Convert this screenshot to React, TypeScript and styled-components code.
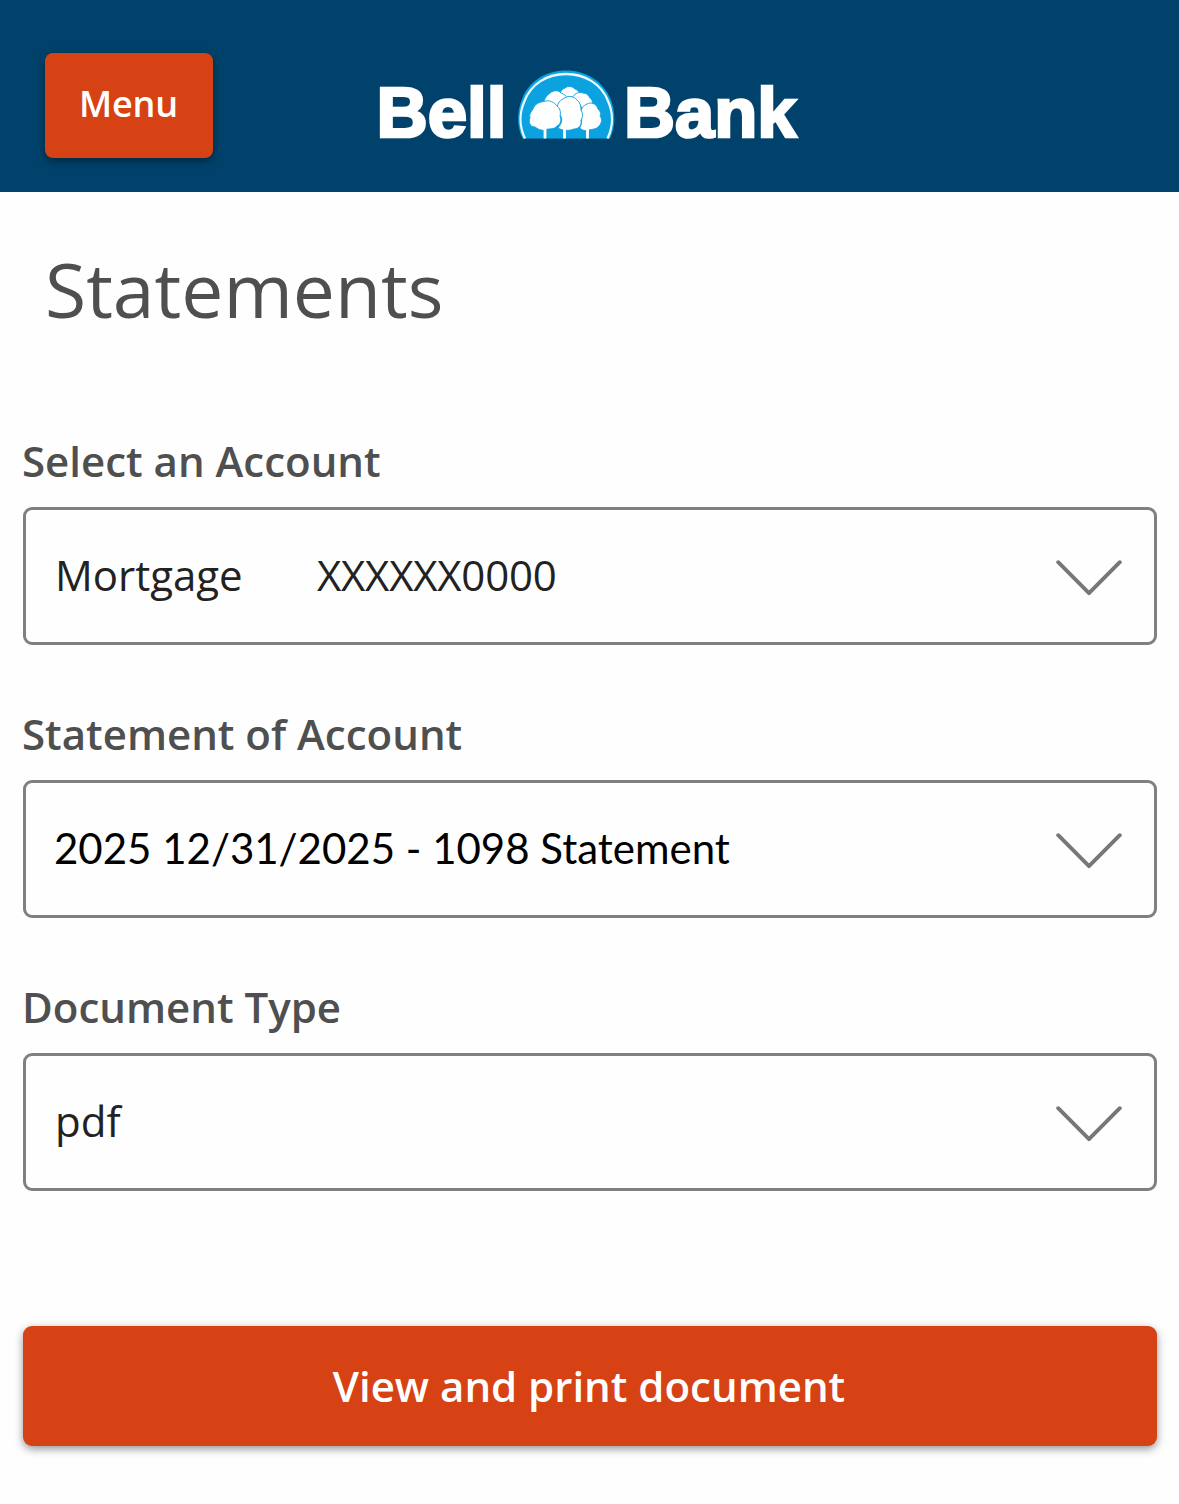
import React from "react";
import styled, { createGlobalStyle, css } from "styled-components";

const GlobalStyle = createGlobalStyle`
  *, *::before, *::after { box-sizing: border-box; }
  body {
    margin: 0;
    background: #fefefe;
    font-family: "Open Sans", sans-serif;
    color: #4f4f4f;
  }
`;

const Header = styled.header`
  display: grid;
  grid-template-columns: 324px 1fr;
  height: 192px;
  padding: 53px 45px 0;
  background: #00426b;
`;

const raised = css`
  border: 0;
  color: #fff;
  background: #d64213;
  font-family: inherit;
  font-weight: 600;
  box-shadow: 0 3px 9px rgba(0, 0, 0, 0.42);
`;

const MenuButton = styled.button`
  ${raised}
  width: 168px;
  height: 105px;
  padding: 0 1px 5px 0;
  border-radius: 8px;
  font-size: 36px;
  letter-spacing: -0.2px;
`;

const Logo = styled.svg`
  display: block;
  width: 444px;
  height: 96px;
  margin-top: 11px;
`;

const Wordmark = styled.text`
  font: 700 70.5px "Liberation Sans", Arial, sans-serif;
  fill: #fff;
  stroke: #fff;
  stroke-width: 2.7px;
`;

const Title = styled.h1`
  margin: 0;
  padding: 46px 45px 0;
  font-size: 75px;
  line-height: 102px;
  font-weight: 400;
`;

const Form = styled.form`
  display: flex;
  flex-direction: column;
  padding: 92px 22px 58px 23px;
`;

const Field = styled.div`
  height: 273px;
`;

const Label = styled.label`
  display: block;
  height: 75px;
  margin-left: -1px;
  line-height: 57px;
  font-size: 42px;
  font-weight: 600;
  white-space: nowrap;
`;

const SelectBox = styled.div<{ $family?: string; $color?: string; $indent?: number }>`
  display: flex;
  align-items: center;
  justify-content: space-between;
  height: 138px;
  padding: 0 32px 0 ${(p) => p.$indent ?? 29}px;
  border: 3px solid #808080;
  border-radius: 9px;
  font-family: ${(p) => p.$family ?? "inherit"};
  font-size: 42px;
  color: ${(p) => p.$color ?? "#222"};
`;

const Value = styled.span<{ $lift?: number }>`
  display: flex;
  padding-bottom: ${(p) => p.$lift ?? 3}px;
  white-space: nowrap;
`;

const AccountKind = styled.span`
  width: 262px;
`;

const AccountNumber = styled.span`
  letter-spacing: -0.2px;
`;

const Chevron = styled.svg`
  width: 66px;
  height: 38px;
  margin-top: 3px;
  fill: none;
  stroke: #777;
  stroke-width: 3.9px;
  stroke-linecap: round;
  stroke-linejoin: round;
`;

const SubmitButton = styled.button`
  ${raised}
  height: 120px;
  margin-top: 75px;
  padding: 0 2px 2px 0;
  border-radius: 9px;
  font-size: 42px;
`;

const DownArrow = () => (
  <Chevron viewBox="0 0 66 38" aria-hidden="true">
    <path d="M2.2 3.2 33 34.2 63.8 3.2" />
  </Chevron>
);

const BellBankLogo = () => (
  <Logo viewBox="-10 -4 444 96" role="img" aria-label="Bell Bank">
    <Wordmark x="-2.5" y="69" textLength="130" lengthAdjust="spacingAndGlyphs">Bell</Wordmark>
    <path d="M143.500 70.500C137.500 58 138 43 143 31C150 13 167 2.500 187 2.500C207 2.500 224 13 231.500 31C236.500 43 237 58 231 70.500Z" fill="#0ba2df" />
    <path d="M146 70.500C139.500 57 141 43 145.500 33C152 16 168 6 187 6C206 6 222.500 16 229 33C233.500 43 235 57 228.500 70.500" fill="none" stroke="#e9f9ff" strokeWidth="2.300" />
    <g fill="#fff" stroke="#0ba2df" strokeWidth="0.900">
      <path d="M181 26C182 22 184 21 186 20C189 17.500 193 18 196 21C199 22 202 25 199 28C196 30 194 31 191 33C188 29 184 28 181 26Z" />
      <path d="M164.500 34C166 30 168 27 171 25C175 22 179 22 182 25C185 26 188 28 188 30C184 32 181 35 180 40C175 39 170 34 164.500 34Z" />
      <path d="M192 31C195 26 200 23 204 25C208 25 210 28 211 30C213 31 214 34 213 37C208 36 205 38 203 42C202 36 198 32 192 31Z" />
      <path d="M202 43C203 38 207 36 211 35C216 35 218 38 219 41C222 44 222 46 221 48C224 52 222 56 220 58C217 62 212 61 208 62.500C204 63 201 61 201 59C204 55 202 48 202 43Z" />
      <path d="M178 42C178 36 180 33 184 31C189 27 195 28 198 32C201 34 202 38 202 42C204 45 204 49 202 52C203 58 199 61 195 61C190 63 184 63 179 60C183 55 184 51 181 47Z" />
      <path d="M151 50C150 46 152 44 154 41C156 36 160 34 165 33.500C170 31.500 175 34 178 38C181 40 182 44 181 48C183 52 181 57 178 58C175 62 170 60 166 62C162 63 159 61 156 59C151 59 149 54 151 50Z" />
    </g>
    <path d="M166 59V70.500M185.500 59V70.500M208.500 59V70.500" stroke="#fff" strokeWidth="2.800" />
    <Wordmark x="245" y="69" textLength="172.5" lengthAdjust="spacingAndGlyphs">Bank</Wordmark>
  </Logo>
);

export default function App() {
  return (
    <>
      <GlobalStyle />
      <Header>
        <MenuButton>Menu</MenuButton>
        <BellBankLogo />
      </Header>
      <main>
        <Title>Statements</Title>
        <Form onSubmit={(e) => e.preventDefault()}>
          <Field>
            <Label>Select an Account</Label>
            <SelectBox>
              <Value>
                <AccountKind>Mortgage</AccountKind>
                <AccountNumber>XXXXXX0000</AccountNumber>
              </Value>
              <DownArrow />
            </SelectBox>
          </Field>
          <Field>
            <Label>Statement of Account</Label>
            <SelectBox $family="Lato, sans-serif" $color="#000" $indent={28}>
              <Value $lift={2}>2025 12/31/2025 - 1098 Statement</Value>
              <DownArrow />
            </SelectBox>
          </Field>
          <Field>
            <Label>Document Type</Label>
            <SelectBox>
              <Value>pdf</Value>
              <DownArrow />
            </SelectBox>
          </Field>
          <SubmitButton type="submit">View and print document</SubmitButton>
        </Form>
      </main>
    </>
  );
}
